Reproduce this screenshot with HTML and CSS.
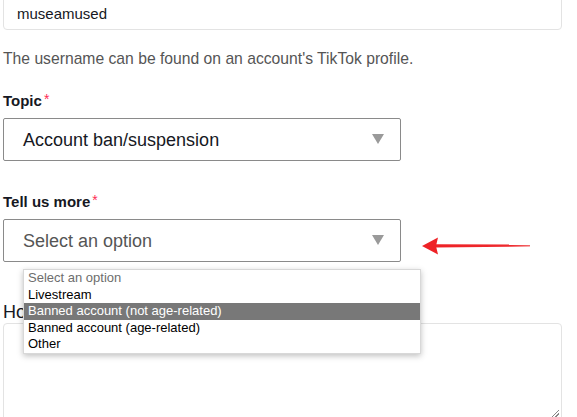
FILE: index.html
```html
<!DOCTYPE html>
<html>
<head>
<meta charset="utf-8">
<link rel="stylesheet" href="styles.css">
</head>
<body>
<div class="page">
  <div class="text-input">museamused</div>
  <p class="helper">The username can be found on an account's TikTok profile.</p>

  <div class="field field-topic">
    <div class="label">Topic<span class="req">*</span></div>
    <div class="select">
      <span class="value">Account ban/suspension</span>
      <span class="caret"></span>
    </div>
  </div>

  <div class="field field-more">
    <div class="label">Tell us more<span class="req">*</span></div>
    <div class="select-wrap">
      <div class="select">
        <span class="value placeholder">Select an option</span>
        <span class="caret"></span>
      </div>
      <ul class="dropdown">
        <li class="opt opt-muted">Select an option</li>
        <li class="opt">Livestream</li>
        <li class="opt opt-active">Banned account (not age-related)</li>
        <li class="opt">Banned account (age-related)</li>
        <li class="opt">Other</li>
      </ul>
      <svg class="pointer" width="112" height="22" viewBox="0 0 112 22">
        <defs>
          <linearGradient id="shaft" x1="0" y1="0" x2="1" y2="0">
            <stop offset="0" stop-color="#ee2226"/>
            <stop offset="0.8" stop-color="#ee2a2e"/>
            <stop offset="1" stop-color="#f26a6c"/>
          </linearGradient>
        </defs>
        <path d="M13 9.2 L108 9.6 L108 11.6 L13 12.6 Z" fill="url(#shaft)"/>
        <path d="M0 11 L16 2.5 L14 11 L16 19.5 Z" fill="#ee2226"/>
      </svg>
    </div>
  </div>

  <div class="field field-how">
    <div class="label label-plain">How can we help?</div>
    <div class="textarea"><span class="grip"></span></div>
  </div>
</div>
</body>
</html>
```

FILE: styles.css
```css
* { box-sizing: border-box; }
html, body { margin: 0; padding: 0; background: #fff; }
body {
  font-family: "Liberation Sans", Arial, sans-serif;
  color: #161823;
  width: 577px;
  height: 417px;
  overflow: hidden;
}
.page {
  padding-left: 3px;
  width: 562px;
  margin-top: -14px;
}
.text-input {
  height: 44px;
  border: 1px solid #e3e3e3;
  border-radius: 4px;
  padding: 17px 0 0 13px;
  font-size: 15px;
  line-height: 20px;
  color: #161823;
}
.helper {
  margin: 19px 0 0 0;
  font-size: 15.7px;
  line-height: 20px;
  color: #555;
}
.field { display: flex; flex-direction: column; }
.field-topic { margin-top: 22px; }
.field-more { margin-top: 31px; }
.field-how { margin-top: 40px; }
.label {
  font-size: 15px;
  font-weight: bold;
  line-height: 20px;
  color: #161823;
}
.label-plain { font-weight: normal; font-size: 18px; line-height: 20px; }
.req { color: #fe2c55; margin-left: 2px; font-weight: normal; font-size: 14px; vertical-align: top; position: relative; top: -2px; }
.select {
  margin-top: 7px;
  width: 398px;
  height: 43px;
  border: 1px solid #8a8a8a;
  border-radius: 2px;
  display: flex;
  align-items: center;
  justify-content: space-between;
  padding: 2px 16px 0 19px;
}
.value { font-size: 18px; color: #161823; }
.placeholder { color: #555; }
.caret {
  width: 0; height: 0;
  border-left: 6px solid transparent;
  border-right: 6px solid transparent;
  border-top: 10px solid #9a9a9a;
  margin-top: -4px;
}
.select-wrap { position: relative; width: 398px; }
.dropdown {
  position: absolute;
  left: 20px;
  top: 57px;
  width: 398px;
  margin: 0;
  padding: 0;
  list-style: none;
  background: #fff;
  border: 1px solid #d8d8d8;
  box-shadow: 0 2px 6px rgba(0,0,0,0.25);
  z-index: 2;
}
.opt {
  font-family: "Liberation Sans", Arial, sans-serif;
  font-size: 13px;
  line-height: 16.5px;
  height: 16.5px;
  padding-left: 4px;
  color: #000;
  white-space: nowrap;
}
.opt-muted { color: #6d6d6d; }
.opt-active { background: #787878; color: #fff; }
.pointer {
  position: absolute;
  left: 419px;
  top: 23px;
}
.textarea {
  margin-top: 1px;
  width: 559px;
  height: 110px;
  border: 1px solid #e3e3e3;
  border-radius: 4px;
  position: relative;
}
.grip {
  position: absolute;
  right: 2px;
  top: 86px;
  width: 7px;
  height: 7px;
  background: linear-gradient(135deg, transparent 45%, #888 45%, #888 55%, transparent 55%, transparent 70%, #888 70%, #888 80%, transparent 80%);
}
```
